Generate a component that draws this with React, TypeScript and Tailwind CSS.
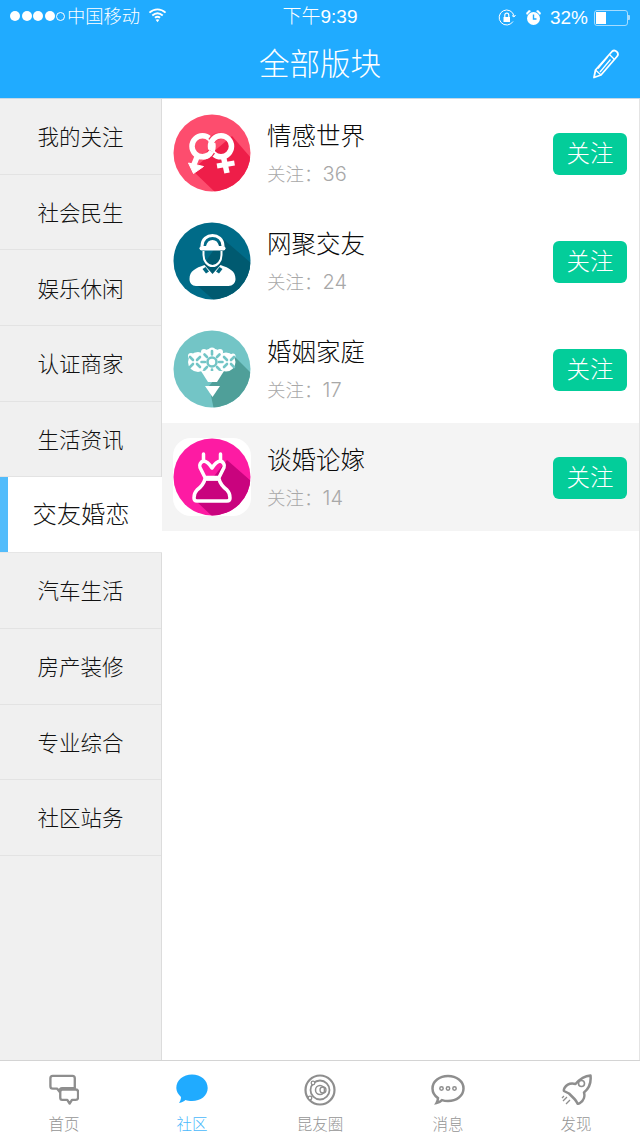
import { ReactNode } from 'react';

const categories = ['我的关注', '社会民生', '娱乐休闲', '认证商家', '生活资讯', '交友婚恋', '汽车生活', '房产装修', '专业综合', '社区站务'];

// 圆形头像：底色 + 长投影 + 白色图形
function Avatar({ id, base, shade, shadow, children }: { id: string; base: string; shade: string; shadow: string; children: ReactNode }) {
  return (
    <div className="w-[78px] h-[78px] shrink-0 bg-white rounded-[18px]">
      <svg width="78" height="78" viewBox="0 0 78 78">
        <defs>
          <clipPath id={id}>
            <circle cx="39" cy="39" r="38.5" />
          </clipPath>
        </defs>
        <circle cx="39" cy="39" r="38.5" fill={base} />
        <path d={shadow} fill={shade} clipPath={`url(#${id})`} />
        {children}
      </svg>
    </div>
  );
}

function RingsIcon() {
  return (
    <g fill="none" stroke="#fff" strokeWidth="5.500">
      <path d="M24 43l-4.500 11" />
      <path d="M15.500 49l15 3.500-10 7z" fill="#fff" strokeWidth="1" strokeLinejoin="round" />
      <path d="M50.500 43l3.500 16" />
      <path d="M44 52l17.500-3" strokeWidth="5" />
      <circle cx="29.500" cy="32.300" r="10.500" />
      <path d="M38.500 27a10.500 10.500 0 0 1 9-5" stroke="#fa3a5e" strokeWidth="7.500" />
      <circle cx="48" cy="32.300" r="10.500" />
      <path d="M38.800 37.500a10.500 10.500 0 0 1-3.500 3.500" stroke="#f0264f" strokeWidth="7.500" />
      <path d="M38.700 37.300a10.500 10.500 0 0 1-9.200 5.500" />
    </g>
  );
}

function WorkerIcon() {
  return (
    <g>
      <path d="M29 24c0-14 21-14 21 0" fill="none" stroke="#fff" strokeWidth="3" />
      <path d="M33 24c1-4 3-6 6.500-6s5.500 2 6.500 6z" fill="#fff" />
      <rect x="26.500" y="24" width="26" height="4.500" rx="2.250" fill="#fff" />
      <path d="M30.500 29v4c0 6 4 11 9 11s9-5 9-11v-4" fill="none" stroke="#fff" strokeWidth="2" />
      <path d="M16.500 57c0-8 6-11 15-14l8 9 8-9c9 3 15 6 15 14 0 4-3 7-7 7H23c-4 0-6.500-3-6.500-7z" fill="#fff" />
      <path d="M29.500 47l3.500 4.500 3-2-3.500-4.500zM49.500 47l-3.500 4.500-3-2 3.500-4.500z" fill="#00667f" />
    </g>
  );
}

function SideFlower({ x }: { x: number }) {
  return (
    <path
      d={`M${x - 5} 27l3 3M${x + 5} 27l-3 3M${x - 5} 37l3-3M${x + 5} 37l-3-3`}
      stroke="#73c5c6"
      strokeWidth="2.600"
      strokeLinecap="round"
    />
  );
}

function BouquetIcon() {
  return (
    <g>
      <g fill="#fff">
        <circle cx="39" cy="31" r="12.500" />
        <circle cx="25" cy="32" r="10" />
        <circle cx="53" cy="32" r="9.500" />
        <circle cx="39" cy="21" r="3.500" />
        <circle cx="31" cy="22" r="3" />
        <circle cx="47" cy="22" r="3" />
        <circle cx="18" cy="26" r="3" />
        <circle cx="60" cy="26" r="2.500" />
      </g>
      <circle cx="39" cy="32" r="4.500" fill="#fff" stroke="#73c5c6" strokeWidth="2.600" />
      <path d="M39 21v3.500M39 39.500V43M28.500 32H32M46 32h3.500M31.500 24.500l2.500 2.500M46.500 24.500L44 27M31.500 39.500L34 37M46.500 39.500L44 37" stroke="#73c5c6" strokeWidth="2.600" strokeLinecap="round" />
      <SideFlower x={22} />
      <SideFlower x={56} />
      <path d="M28 41h23l-7 11h-9z" fill="#fff" />
      <path d="M32 56h15l-7.500 11z" fill="#fff" />
    </g>
  );
}

function DressIcon() {
  return (
    <g strokeLinejoin="round" strokeLinecap="round">
      <path d="M32 41h14c1 4 4 8 8 11 2 2 3 5 3 8v3H21v-3c0-3 1-6 3-8 4-3 7-7 8-11z" fill="#c9037e" />
      <g fill="none" stroke="#fff" strokeWidth="3.500">
        <path d="M30.500 16v7M47.500 16v7" />
        <path d="M30.500 23c-3 1-4.500 4-3.500 6.500l5 10h14l5-10c1-2.500-.5-5.500-3.500-6.500-3.500.5-6 3-8.500 7-2.500-4-5-6.500-8.500-7z" />
        <path d="M32 41c-1 4-4 8-8 11-2 2-3 5-3 8 0 2 1 3 3 3h30c2 0 3-1 3-3 0-3-1-6-3-8-4-3-7-7-8-11z" />
      </g>
      <rect x="31" y="38.500" width="16" height="4" fill="#fff" />
    </g>
  );
}

const sections = [
  {
    name: '情感世界',
    count: 36,
    avatar: (
      <Avatar id="a1" base="#fd4d6e" shade="#ee1e49" shadow="M59 22L78 44V80H44L19 56Z">
        <RingsIcon />
      </Avatar>
    ),
  },
  {
    name: '网聚交友',
    count: 24,
    avatar: (
      <Avatar id="a2" base="#006b88" shade="#005a70" shadow="M49 16L78 41V80H43L19 59Z">
        <WorkerIcon />
      </Avatar>
    ),
  },
  {
    name: '婚姻家庭',
    count: 17,
    avatar: (
      <Avatar id="a3" base="#73c5c6" shade="#4f9f99" shadow="M61 26L78 43V80H41L36 56Z">
        <BouquetIcon />
      </Avatar>
    ),
  },
  {
    name: '谈婚论嫁',
    count: 14,
    avatar: (
      <Avatar id="a4" base="#fd1ba3" shade="#c9037e" shadow="M54 22L78 43V80H41L22 62Z">
        <DressIcon />
      </Avatar>
    ),
  },
];

function StatusBar() {
  return (
    <div className="relative h-[40px] flex items-start text-white font-light">
      <div className="flex items-center gap-[1.5px] pl-[10px] pt-[11px]">
        {[0, 1, 2, 3].map((i) => (
          <span key={i} className="w-[10px] h-[10px] rounded-full bg-white" />
        ))}
        <span className="w-[9px] h-[9px] rounded-full border border-white" />
      </div>
      <span className="ml-[2px] mt-[8px] text-[18.3px] leading-[18px]">中国移动</span>
      <svg className="ml-[8px] mt-[7px]" width="19" height="16" viewBox="0 0 20 16" fill="none" stroke="#fff" strokeWidth="2">
        <path d="M1.5 5.5c5-4.6 12-4.6 17 0M4.5 8.5c3.400-3 7.600-3 11 0M7.300 11c1.700-1.400 3.700-1.400 5.400 0" />
        <path d="M10 15.500l2-2.400c-1.200-.9-2.800-.9-4 0z" fill="#fff" stroke="none" />
      </svg>
      <span className="absolute left-0 right-0 top-[6px] text-center text-[19px] leading-[22px]">下午9:39</span>
      <div className="ml-auto pr-[10px] pt-[8px] flex items-center">
        <svg width="18" height="18" viewBox="0 0 18 18" fill="none" stroke="#fff">
          <path d="M15 12.500A7.500 7.500 0 1 1 16 7" strokeWidth="1" />
          <path d="M14 6.500l2 1.500 1.500-2" strokeWidth="1" />
          <rect x="5.500" y="8" width="6.500" height="5" fill="#fff" stroke="none" />
          <path d="M6.800 8V6.200a2 2 0 0 1 4 0V8" strokeWidth="1.200" />
        </svg>
        <svg className="ml-[9px]" width="17" height="17" viewBox="0 0 17 17" fill="#fff">
          <circle cx="8.500" cy="9.500" r="6.500" />
          <path d="M1 4l3-3 2 1-4 4zM16 4l-3-3-2 1 4 4z" />
          <path d="M8.500 5.500v4.500h3" fill="none" stroke="#20abff" strokeWidth="1.400" />
        </svg>
        <span className="ml-[8px] text-[19px] leading-none">32%</span>
        <div className="ml-[6px] w-[34px] h-[16px] border border-[#a5dcff] rounded-[3px] p-[1px]">
          <div className="w-[10px] h-full bg-white" />
        </div>
        <span className="w-[2px] h-[5px] bg-[#a5dcff] rounded-r-[1px]" />
      </div>
    </div>
  );
}

function NavBar() {
  return (
    <div className="relative h-[59px] flex items-center justify-center border-b border-[#c6d8e6] text-white">
      <span className="text-[30.500px] font-light leading-none mb-[10px]">全部版块</span>
      <svg className="absolute right-[20px] top-[9px]" width="28" height="30" viewBox="0 0 28 30" fill="none" stroke="#fff" strokeWidth="1.800" strokeLinejoin="round">
        <path d="M20 2.500c1.500-1.400 3.300-1.200 4.700.2 1.500 1.500 1.700 3.200.3 4.800L9 26l-7 2.500L3.500 21z" />
        <path d="M17.500 5.500l5 5M3.500 21l5.500 5M15.500 8L6 19.500M18.500 10.500L8 23" strokeWidth="1.300" />
      </svg>
    </div>
  );
}

function Sidebar() {
  return (
    <div className="w-[162px] shrink-0 bg-[#f0f0f0] border-r border-[#dcdcdc]">
      {categories.map((name) =>
        name === '交友婚恋' ? (
          <div key={name} className="relative h-[75.7px] w-[162px] flex items-center justify-center bg-white border-b border-[#e6e6e6] text-[24.300px] text-[#111] font-light">
            <span className="absolute left-0 top-0 bottom-0 w-[8px] bg-[#52bcfb]" />
            {name}
          </div>
        ) : (
          <div key={name} className="h-[75.7px] flex items-center justify-center pt-[4px] border-b border-[#e3e3e3] text-[21.500px] text-[#111] font-light">
            {name}
          </div>
        ),
      )}
    </div>
  );
}

function SectionRow({ section, active }: { section: (typeof sections)[number]; active: boolean }) {
  return (
    <div className={`h-[108px] flex items-center pl-[11px] pr-[12px] ${active ? 'bg-[#f4f4f4]' : 'bg-white'}`}>
      {section.avatar}
      <div className="ml-[16px] pt-[2px] flex-1">
        <div className="text-[24.500px] leading-[30px] text-[#0a0a0a] font-light">{section.name}</div>
        <div className="mt-[10px] text-[18.500px] leading-[24px] text-[#a8a8a8] font-light">
          关注：<span className="font-['Inter'] text-[20px]">{section.count}</span>
        </div>
      </div>
      <button className="w-[74px] h-[42px] mt-[2px] pt-[2px] rounded-[6px] bg-[#03cd9a] text-white text-[23.500px] font-light leading-none">关注</button>
    </div>
  );
}

function TabBar() {
  const grey = '#8e8e8e';
  const tabs = [
    {
      label: '首页',
      icon: (
        <svg width="30" height="32" viewBox="0 0 32 34" fill="none" stroke={grey} strokeWidth="2.500" strokeLinejoin="round">
          <path d="M4 2h21c1.500 0 2.500 1 2.500 2.500V15H14c-1.500 0-2.500 1-2.500 2.500V19l-3-3.500H4c-1.500 0-2.500-1-2.500-2.500V4.500C1.500 3 2.500 2 4 2z" />
          <path d="M12 19c0-1.500 1-2.500 2.500-2.500h14c1.500 0 2.500 1 2.500 2.500v6c0 1.500-1 2.500-2.500 2.500h-4l-2.500 4-2.500-4h-5.500C13 27.500 12 26.500 12 25z" />
        </svg>
      ),
    },
    {
      label: '社区',
      active: true,
      icon: (
        <svg width="32" height="32" viewBox="0 0 32 32" fill="#20abff">
          <path d="M16 .5c8.700 0 15.700 5.700 15.700 13.500S24.700 27 16 27c-2.500 0-4.500-.3-6.500-1-1.500 1.300-3.500 2.700-6.500 3 1-1.500 2-3.500 2-6C2.500 20.500.3 17.500.3 14 .3 6.200 7.300.5 16 .5z" />
        </svg>
      ),
    },
    {
      label: '昆友圈',
      icon: (
        <svg width="32" height="32" viewBox="0 0 32 32" fill="none" stroke={grey}>
          <circle cx="16" cy="16" r="14.500" strokeWidth="2.200" />
          <circle cx="16" cy="16" r="9.500" strokeWidth="1.800" />
          <circle cx="16" cy="16" r="4.500" strokeWidth="1.500" />
          <circle cx="19" cy="16" r="3" strokeWidth="1.300" />
          <circle cx="9" cy="9" r="1.800" fill="#fff" strokeWidth="1.300" />
          <circle cx="6" cy="24" r="1.800" fill="#fff" strokeWidth="1.300" />
        </svg>
      ),
    },
    {
      label: '消息',
      icon: (
        <svg width="34" height="32" viewBox="0 0 34 32" fill="none" stroke={grey} strokeWidth="2.500">
          <path d="M17 2c8.500 0 15.500 5.300 15.500 12.500S25.500 27 17 27c-2.300 0-4.200-.3-6-.9-1.300 1.300-3 2.700-5.500 3 1-1.600 1.500-3 1.500-5C3.800 22 1.500 18.500 1.500 14.500 1.500 7.300 8.500 2 17 2z" />
          <circle cx="10.500" cy="14.500" r="1.700" strokeWidth="1.500" />
          <circle cx="17" cy="14.500" r="1.700" strokeWidth="1.500" />
          <circle cx="23.500" cy="14.500" r="1.700" strokeWidth="1.500" />
        </svg>
      ),
    },
    {
      label: '发现',
      icon: (
        <svg width="32" height="32" viewBox="0 0 32 32" fill="none" stroke={grey} strokeWidth="2.500" strokeLinejoin="round">
          <path d="M30.500 1.500c.8 7-1.500 13-6.500 17 1 3.500 0 8-4 10.500-1 .7-2 1-2.500.5-1-2-1.500-3-3-4.500l-5.500-5.500c-2-1-3-1.500-5-2.500-.5-1 0-2 .5-3 2.500-4 7-5 11-4C19 6 24 2 30.500 1.500z" />
          <circle cx="21.500" cy="9.500" r="3" strokeWidth="1.600" />
          <path d="M7 23l-4 4M10 26l-4 4M4 22l-2 2" strokeWidth="1.300" />
        </svg>
      ),
    },
  ];

  return (
    <div className="h-[77px] shrink-0 grid grid-cols-5 bg-white border-t border-[#d4d4d4]">
      {tabs.map((tab) => (
        <div key={tab.label} className="flex flex-col items-center pt-[13px]">
          <div className="h-[32px] flex items-center">{tab.icon}</div>
          <span className={`mt-[9px] text-[15.500px] leading-[20px] font-light ${tab.active ? 'text-[#4ab8fb]' : 'text-[#959595]'}`}>{tab.label}</span>
        </div>
      ))}
    </div>
  );
}

export default function App() {
  return (
    <div
      className="w-[640px] h-[1137px] flex flex-col bg-white overflow-hidden"
      style={{ fontFamily: '"Liberation Sans", "Noto Sans CJK SC", sans-serif' }}
    >
      <div className="shrink-0 bg-[#20abff]">
        <StatusBar />
        <NavBar />
      </div>
      <div className="flex-1 flex min-h-0">
        <Sidebar />
        <div className="flex-1 border-r border-[#e4e4e4]">
          {sections.map((section) => (
            <SectionRow key={section.name} section={section} active={section.name === '谈婚论嫁'} />
          ))}
        </div>
      </div>
      <TabBar />
    </div>
  );
}
